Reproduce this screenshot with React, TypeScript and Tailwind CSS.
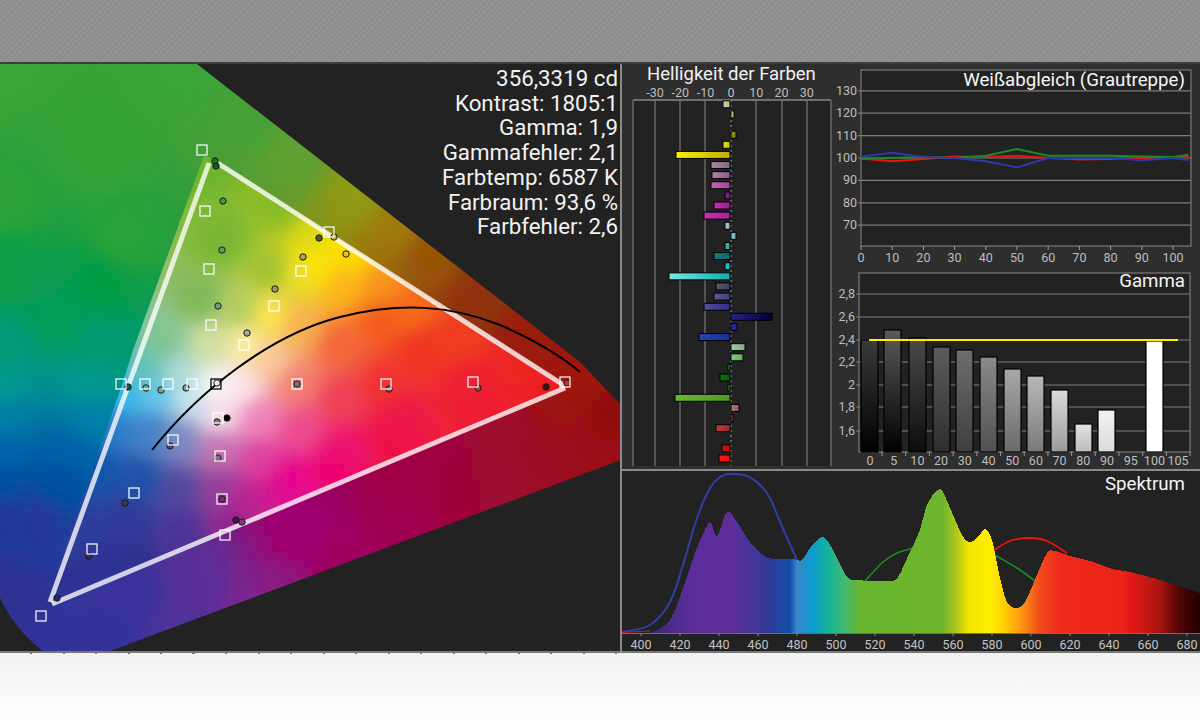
import { useMemo } from 'react';

type Stop = [number, number, string];

// colour samples read off the diagram, outside of the measured triangle
const outerField: Stop[] = [
  [0, 64, '#3aa537'], [197, 64, '#3aa537'], [100, 150, '#35a437'], [0, 200, '#2da338'], [120, 240, '#2aa33a'], [0, 270, '#0a9e45'],
  [100, 280, '#039c45'], [60, 320, '#069c58'], [0, 350, '#009a78'], [100, 350, '#009a70'], [0, 383, '#009a8f'], [90, 383, '#009a8f'],
  [0, 417, '#0080a8'], [90, 417, '#0080a8'], [0, 450, '#0062a8'], [70, 450, '#0062a8'], [0, 483, '#0050a0'], [60, 483, '#0050a0'],
  [0, 516, '#26389a'], [40, 520, '#26389a'], [10, 600, '#2e3192'], [40, 640, '#30339a'], [110, 640, '#34339c'], [180, 635, '#4f3098'],
  [130, 600, '#38339a'], [200, 590, '#5a2f98'], [250, 610, '#7b2890'], [280, 590, '#8a1a80'], [340, 560, '#9e0060'], [300, 540, '#a00070'],
  [400, 530, '#9e0050'], [420, 480, '#a00045'], [440, 450, '#a0043e'], [460, 490, '#9f0538'], [500, 480, '#9e0a30'], [500, 425, '#9e0c2c'],
  [540, 455, '#9c0c22'], [560, 410, '#9c1212'], [621, 455, '#9c0f14'],
  [621, 410, '#8f0f08'], [580, 370, '#a01508'], [530, 340, '#9a1c08'], [480, 300, '#8f3208'], [430, 250, '#985406'], [400, 225, '#a07a0a'],
  [360, 190, '#8f9a18'], [300, 150, '#5ea030'], [250, 110, '#45a036'],
];

// and inside of it
const innerField: Stop[] = [
  [210, 160, '#6cb52d'], [280, 205, '#86bb25'], [320, 235, '#d8d818'], [335, 245, '#ffe600'], [350, 258, '#ffd800'], [380, 285, '#f7941d'],
  [410, 310, '#f56a1a'], [460, 340, '#ef3b20'], [520, 370, '#ed2524'], [560, 388, '#ed1c24'],
  [222, 240, '#78b733'], [270, 270, '#9cc230'], [300, 275, '#ece02a'], [315, 265, '#ffe600'], [345, 285, '#ffb31c'], [380, 320, '#f4581f'], [420, 350, '#ef3323'],
  [200, 300, '#7cb858'], [240, 310, '#b0cc60'], [270, 315, '#ffe84a'], [300, 325, '#f7b050'], [340, 345, '#f5643a'], [385, 385, '#f03030'], [470, 385, '#ed2030'],
  [165, 340, '#80c490'], [210, 345, '#d0e0a0'], [245, 345, '#fff0a0'], [270, 360, '#fbc8a0'], [297, 384, '#f47f70'], [340, 400, '#ef4055'], [400, 420, '#ed1848'], [480, 410, '#ed1c30'],
  [145, 370, '#60c0b0'], [180, 375, '#b0dcd8'], [215, 385, '#ffffff'], [240, 385, '#ffe8f0'],
  [125, 395, '#30b8ee'], [155, 395, '#60c8f0'], [190, 400, '#c8e8f4'], [220, 415, '#ffe0ee'], [260, 420, '#f080b8'], [300, 430, '#ee4a90'], [345, 450, '#ec1270'], [390, 445, '#ed1048'],
  [115, 430, '#2a78c8'], [150, 430, '#4080c8'], [180, 440, '#7888c0'], [220, 450, '#c870b0'], [260, 460, '#e040a0'], [290, 480, '#ec008c'], [335, 470, '#ec0070'],
  [100, 470, '#0f54a8'], [140, 480, '#1c50a8'], [180, 490, '#50489c'], [220, 490, '#963c98'], [250, 500, '#c02090'], [280, 495, '#d81090'],
  [80, 530, '#2e3c9c'], [130, 520, '#2e3a98'], [180, 530, '#483598'], [230, 525, '#92278f'],
  [60, 590, '#2e3192'], [100, 570, '#2e3192'], [140, 560, '#2f3292'], [180, 545, '#503094'],
];

const CELL = 8;

function sampleField(field: Stop[], x: number, y: number) {
  let r = 0;
  let g = 0;
  let b = 0;
  let total = 0;
  for (const [sx, sy, hex] of field) {
    const d = (x - sx) ** 2 + (y - sy) ** 2 + 250;
    const w = 1 / (d * d);
    total += w;
    r += w * parseInt(hex.slice(1, 3), 16);
    g += w * parseInt(hex.slice(3, 5), 16);
    b += w * parseInt(hex.slice(5, 7), 16);
  }
  return `rgb(${Math.round(r / total)},${Math.round(g / total)},${Math.round(b / total)})`;
}

function ColorField({ field, x0, y0, x1, y1 }: { field: Stop[]; x0: number; y0: number; x1: number; y1: number }) {
  const cells = useMemo(() => {
    const out: { x: number; y: number; fill: string }[] = [];
    for (let y = y0; y < y1; y += CELL) {
      for (let x = x0; x < x1; x += CELL) {
        out.push({ x, y, fill: sampleField(field, x + CELL / 2, y + CELL / 2) });
      }
    }
    return out;
  }, [field, x0, y0, x1, y1]);
  return (
    <g filter="url(#soften)">
      {cells.map((c) => (
        <rect key={`${c.x}-${c.y}`} x={c.x} y={c.y} width={CELL + 1} height={CELL + 1} fill={c.fill} />
      ))}
    </g>
  );
}

const squares: [number, number, string?][] = [
  [202, 150], [205, 211], [209, 269], [211, 325], [244, 345], [274, 306], [301, 271], [329, 232],
  [121, 384], [145, 384], [168, 384], [192, 384], [216, 384, '#000'], [297, 384], [386, 384], [473, 382], [565, 382],
  [218, 418], [173, 440], [220, 456], [134, 493], [222, 499], [225, 535], [92, 549], [41, 616],
];

const dots: [number, number, string][] = [
  [215, 161, '#1f7a2a'], [216, 166, '#14591f'], [223, 201, '#3f9a40'], [222, 250, '#4fa560'], [218, 306, '#7a9a80'],
  [247, 333, '#a8a8a0'], [275, 289, '#9a9a70'], [303, 257, '#a8a860'], [319, 238, '#55551c'], [334, 237, '#b8b820'], [346, 254, '#d8c820'],
  [128, 387, '#0a5a50'], [146, 388, '#60b0a8'], [161, 390, '#70a8a0'], [186, 388, '#809a90'], [217, 383, '#e8e8e8'],
  [297, 384, '#7a7070'], [389, 389, '#8a5050'], [478, 388, '#a04040'], [546, 387, '#401010'], [567, 383, '#c03030'],
  [227, 418, '#000000'], [217, 422, '#807a80'], [170, 446, '#444a58'], [218, 458, '#807080'], [125, 503, '#3a3a60'],
  [222, 499, '#7a2a80'], [236, 520, '#4a0f50'], [242, 522, '#90308a'], [89, 556, '#2a2a70'], [57, 598, '#252a70'],
];

function GamutPanel() {
  return (
    <div className="relative w-[622px] border-r-2 border-[#8a8a8a] bg-[#222222]">
      <svg viewBox="0 64 620 589" className="block h-[589px] w-[620px]">
        <defs>
          <filter id="soften" filterUnits="userSpaceOnUse" x="-40" y="20" width="720" height="680">
            <feGaussianBlur stdDeviation="4" />
          </filter>
          <clipPath id="gamut">
            <path d="M0 64 L197 64 L580 362 L621 405 L621 460 L110 651 L43 651 Q15 630 0 598 Z" />
          </clipPath>
          <clipPath id="inner">
            <path d="M204 156 L216 160 L568 388 L52 606 L46 600 L122 385 L133 350 Z" />
          </clipPath>
        </defs>

        <g clipPath="url(#gamut)">
          <ColorField field={outerField} x0={-16} y0={48} x1={640} y1={668} />
        </g>
        <g clipPath="url(#inner)">
          <ColorField field={innerField} x0={24} y0={136} x1={592} y1={624} />
        </g>

        {/* measured gamut triangle */}
        <g stroke="#ffffff" strokeOpacity="0.78" strokeWidth="5" fill="none">
          <path d="M209 163 L50 602" />
          <path d="M216 162 L565 386" />
          <path d="M565 388 L52 604" />
        </g>

        <path d="M152 450 C 200 390 270 335 340 317 C 400 302 450 305 500 325 C 530 338 560 355 580 372" fill="none" stroke="#000" strokeWidth="2" />

        {dots.map(([cx, cy, fill], i) => (
          <circle key={i} cx={cx} cy={cy} r="3.2" fill={fill} stroke="#1a1a1a" strokeWidth="1" />
        ))}
        {squares.map(([x, y, stroke], i) => (
          <rect key={i} x={x - 5} y={y - 5} width="10" height="10" fill="none" stroke={stroke ?? '#ffffff'} strokeOpacity={stroke ? 1 : 0.92} strokeWidth="1.3" />
        ))}
        <rect x="0" y="651" width="620" height="2" fill="#777777" />
      </svg>

      <div className="absolute right-[2px] top-[2px] text-right text-[22.3px] leading-[24.7px] text-[#f2f2f2]">
        <div>356,3319 cd</div>
        <div>Kontrast: 1805:1</div>
        <div>Gamma: 1,9</div>
        <div>Gammafehler: 2,1</div>
        <div>Farbtemp: 6587 K</div>
        <div>Farbraum: 93,6 %</div>
        <div>Farbfehler: 2,6</div>
      </div>
    </div>
  );
}

// [row, from, to, color left, color right], values in px from the zero line
const brightnessBars: [number, number, number, string, string][] = [
  [0, -7, 0, '#cfcfa8', '#b8b890'],
  [1, 1, 4, '#d0d090', '#b8b870'],
  [3, 1, 6, '#8a8a10', '#8a8a10'],
  [4, -7, 0, '#e0e010', '#c8c810'],
  [5, -54, 0, '#ffee00', '#c0ae00'],
  [6, -19, 0, '#a58aa0', '#806880'],
  [7, -18, 0, '#b080b0', '#885a88'],
  [8, -19, 0, '#c068b8', '#a04a98'],
  [9, -5, 0, '#801a88', '#801a88'],
  [10, -16, 0, '#c030b0', '#a01c98'],
  [11, -26, 0, '#c836b0', '#a82098'],
  [12, -5, 0, '#b0cccc', '#90acac'],
  [13, 1, 6, '#80c8c8', '#70b0b0'],
  [14, -5, 0, '#40b8b8', '#30a0a0'],
  [15, -16, 0, '#108080', '#086868'],
  [16, -5, 0, '#10d0d0', '#10b8b8'],
  [17, -61, 0, '#80e4e4', '#08b0b0'],
  [18, -14, 0, '#585870', '#40405a'],
  [19, -16, 0, '#5a5a98', '#404080'],
  [20, -26, 0, '#50509c', '#303088'],
  [21, 1, 42, '#24248a', '#000038'],
  [22, 1, 7, '#2030b0', '#1a2898'],
  [23, -31, 0, '#2444b0', '#18309c'],
  [24, 1, 15, '#a0c8a0', '#80b080'],
  [25, 1, 13, '#80cc80', '#60b060'],
  [26, -2, 0, '#30a030', '#30a030'],
  [27, -10, 0, '#107010', '#0c5c0c'],
  [28, -2, 0, '#30a030', '#30a030'],
  [29, -55, 0, '#68b830', '#509c24'],
  [30, 1, 9, '#a87878', '#906060'],
  [31, 1, 3, '#b84858', '#b84858'],
  [32, -14, 0, '#b83840', '#a02830'],
  [34, -8, 0, '#d81010', '#b80c0c'],
  [35, -11, 0, '#ff1414', '#f01010'],
];

const brightnessGrid = [633, 655, 680, 705, 756, 782, 807, 831];
const brightnessTicks = [-30, -20, -10, 0, 10, 20, 30];

function BrightnessPanel() {
  return (
    <div className="relative h-full w-[210px] bg-[#2e2e2e]">
      <div className="absolute left-[25px] top-[1px] text-[18.5px] leading-[18px] text-[#f2f2f2]">Helligkeit der Farben</div>
      <svg viewBox="622 64 210 405" className="block h-[405px] w-[210px]">
        <defs>
          {brightnessBars.map(([row, , , from, to]) => (
            <linearGradient key={row} id={`bar${row}`}>
              <stop offset="0" stopColor={from} />
              <stop offset="1" stopColor={to} />
            </linearGradient>
          ))}
        </defs>
        <rect x="633" y="100" width="198" height="366" fill="#222222" />
        <path d="M633 100 H831" stroke="#888" strokeWidth="1.5" />
        {brightnessGrid.map((x) => (
          <path key={x} d={`M${x} 100 V466`} stroke="#777" strokeWidth="1.2" />
        ))}
        <path d="M731 100 V466" stroke="#999" strokeWidth="1" strokeDasharray="2 3" />
        {brightnessTicks.map((t, i) => (
          <text key={t} x={655 + i * 25.3} y="96.5" textAnchor="middle" fontSize="12.5" fill="#bdbdbd">
            {t}
          </text>
        ))}
        {brightnessBars.map(([row, a, b]) => (
          <rect key={row} x={730 + a} y={100.8 + row * 10.12} width={b - a} height="7" fill={`url(#bar${row})`} stroke="#000" strokeWidth="1" />
        ))}
      </svg>
    </div>
  );
}

const wbX = (v: number) => 861 + v * 3.12;
const wbY = (v: number) => 158 - (v - 100) * 2.24;
const wbSteps = [0, 10, 20, 30, 40, 50, 60, 70, 80, 90, 100, 105];
const wbLines: [string, number[]][] = [
  ['#f01212', [99.8, 98.5, 99.5, 100.7, 100.5, 101, 100, 99.3, 99.5, 100, 100, 100.8]],
  ['#1c8a2c', [99.7, 100, 100.5, 100, 101, 104, 101, 101, 101, 100.7, 100.5, 101.5]],
  ['#2a3aa8', [100.7, 102.3, 100.5, 100, 98.5, 95.8, 100, 100, 100, 99, 100, 99]],
];

function WhiteBalance() {
  return (
    <div className="relative h-[203px] bg-[#2e2e2e]">
      <div className="absolute right-[15px] top-[4px] text-[18.7px] leading-[24px] text-[#f5f5f5]">Weißabgleich (Grautreppe)</div>
      <svg viewBox="832 64 368 203" className="block h-[203px] w-[368px]">
        <rect x="861" y="70" width="330" height="176" fill="#222222" stroke="#888" strokeWidth="1" />
        {[130, 120, 110, 100, 90, 80, 70].map((v) => (
          <g key={v}>
            <path d={`M858 ${wbY(v)} H1191`} stroke="#7c7c7c" strokeWidth="1.2" />
            <text x="857" y={wbY(v) + 4} textAnchor="end" fontSize="12.5" fill="#bdbdbd">
              {v}
            </text>
          </g>
        ))}
        {wbSteps.slice(0, 11).map((v) => (
          <g key={v}>
            <path d={`M${wbX(v)} 246 V250`} stroke="#999" strokeWidth="1" />
            <text x={wbX(v)} y="262" textAnchor="middle" fontSize="12.5" fill="#bdbdbd">
              {v}
            </text>
          </g>
        ))}
        {wbLines.map(([color, values]) => (
          <polyline
            key={color}
            points={values.map((v, i) => `${wbX(wbSteps[i])},${wbY(v)}`).join(' ')}
            fill="none"
            stroke={color}
            strokeWidth="2"
          />
        ))}
      </svg>
    </div>
  );
}

const gammaBars: [number, number, string, string][] = [
  [861, 340, '#3a3a3a', '#000000'],
  [884, 330, '#5a5a5a', '#000000'],
  [909, 338, '#4a4a4a', '#0c0c0c'],
  [933, 347, '#5c5c5c', '#2e2e2e'],
  [956, 350, '#6e6e6e', '#3e3e3e'],
  [980, 357, '#8a8a8a', '#505050'],
  [1004, 369, '#a8a8a8', '#6a6a6a'],
  [1027, 376, '#b8b8b8', '#7a7a7a'],
  [1051, 390, '#dadada', '#9a9a9a'],
  [1075, 424, '#e2e2e2', '#bcbcbc'],
  [1098, 410, '#f2f2f2', '#dcdcdc'],
  [1146, 341, '#ffffff', '#ffffff'],
];
const gammaLevels: [string, number][] = [['2,8', 294], ['2,6', 317], ['2,4', 340], ['2,2', 362], ['2', 385], ['1,8', 407], ['1,6', 431]];
const gammaSteps = [0, 5, 10, 20, 30, 40, 50, 60, 70, 80, 90, 95, 100, 105];

function Gamma() {
  return (
    <div className="relative h-[202px] bg-[#2e2e2e]">
      <div className="absolute right-[15px] top-[2px] text-[18.7px] leading-[24px] text-[#f5f5f5]">Gamma</div>
      <svg viewBox="832 267 368 202" className="block h-[202px] w-[368px]">
        <defs>
          {gammaBars.map(([x, , from, to]) => (
            <linearGradient key={x} id={`g${x}`} x1="0" y1="0" x2="0" y2="1">
              <stop offset="0" stopColor={from} />
              <stop offset="1" stopColor={to} />
            </linearGradient>
          ))}
        </defs>
        <rect x="859" y="273" width="331" height="179" fill="#222222" stroke="#888" strokeWidth="1" />
        {gammaLevels.map(([label, y]) => (
          <g key={label}>
            <path d={`M856 ${y} H1190`} stroke="#7c7c7c" strokeWidth="1.2" />
            <text x="855" y={y + 4} textAnchor="end" fontSize="12.5" fill="#bdbdbd">
              {label}
            </text>
          </g>
        ))}
        {gammaBars.map(([x, top]) => (
          <rect key={x} x={x} y={top} width="17" height={452 - top} fill={`url(#g${x})`} stroke="#000" strokeWidth="1.2" />
        ))}
        <path d="M869 340 H1178" stroke="#ffee00" strokeWidth="2" />
        {gammaSteps.map((v, i) => (
          <g key={v}>
            <path d={`M${882 + i * 23.7} 452 V456`} stroke="#999" strokeWidth="1" />
            <text x={870 + i * 23.7} y="465" textAnchor="middle" fontSize="12.5" fill="#bdbdbd">
              {v}
            </text>
          </g>
        ))}
      </svg>
    </div>
  );
}

type Pt = [number, number];

// catmull-rom through the read-off points, so the curves stay round
function smooth(pts: Pt[]) {
  let d = `M${pts[0][0]} ${pts[0][1]}`;
  for (let i = 0; i < pts.length - 1; i++) {
    const p0 = pts[Math.max(i - 1, 0)];
    const p1 = pts[i];
    const p2 = pts[i + 1];
    const p3 = pts[Math.min(i + 2, pts.length - 1)];
    const c1x = p1[0] + (p2[0] - p0[0]) / 6;
    const c1y = p1[1] + (p2[1] - p0[1]) / 6;
    const c2x = p2[0] - (p3[0] - p1[0]) / 6;
    const c2y = p2[1] - (p3[1] - p1[1]) / 6;
    d += ` C${c1x} ${c1y} ${c2x} ${c2y} ${p2[0]} ${p2[1]}`;
  }
  return d;
}

const spectrumCurve: Pt[] = [
  [640, 633], [653, 632], [670, 620], [683, 588], [697, 548], [708, 524], [712, 525], [717, 536], [727, 512], [737, 522], [750, 542], [763, 555], [773, 559],
  [783, 559], [793, 559], [802, 560], [810, 548], [820, 538], [827, 540], [837, 558], [847, 577], [857, 580], [875, 581], [890, 581], [898, 577], [910, 552],
  [920, 530], [927, 505], [940, 489], [950, 508], [962, 535], [970, 542], [978, 537], [985, 529], [992, 540], [1000, 578], [1007, 602], [1016, 608], [1025, 602],
  [1037, 575], [1047, 553], [1055, 551], [1070, 556], [1090, 561], [1113, 569], [1130, 572], [1160, 580], [1200, 593],
];
const blueCurve: Pt[] = [[622, 632], [650, 625], [670, 602], [683, 565], [697, 518], [710, 488], [720, 477], [730, 474], [747, 476], [760, 485], [770, 498], [780, 522], [797, 560]];
const greenCurve: Pt[] = [[865, 581], [883, 562], [897, 553], [913, 548], [930, 540]];
const greenCurve2: Pt[] = [[985, 548], [995, 555], [1017, 568], [1035, 581]];
const redCurve: Pt[] = [[985, 558], [993, 551], [1010, 541], [1030, 538], [1047, 541], [1067, 553]];

const spectrumStops: [number, string][] = [
  [650, '#3a2a70'], [690, '#5b2d9b'], [730, '#5f2d9a'], [770, '#2f3a98'], [790, '#0f4fa8'], [797, '#3d86c8'], [812, '#0a9bd0'], [826, '#12b0a0'],
  [842, '#3cb878'], [860, '#6ab52f'], [942, '#6db52d'], [955, '#a8c520'], [968, '#f0e400'], [990, '#fff000'], [1002, '#ffd400'], [1020, '#ff9a10'],
  [1040, '#f04a1a'], [1060, '#ee2a1a'], [1120, '#ec2418'], [1130, '#e31a16'], [1160, '#a81410'], [1180, '#4d0505'], [1198, '#280000'],
];
const spectrumLabels = [400, 420, 440, 460, 480, 500, 520, 540, 560, 580, 600, 620, 640, 660, 680];

function Spectrum() {
  return (
    <div className="relative h-[184px] border-t-2 border-[#8a8a8a] bg-[#222222]">
      <div className="absolute right-[15px] top-[1px] text-[18.7px] leading-[24px] text-[#f5f5f5]">Spektrum</div>
      <svg viewBox="622 471 578 182" className="block h-[182px] w-[578px]">
        <defs>
          <linearGradient id="rainbow" gradientUnits="userSpaceOnUse" x1="622" y1="0" x2="1200" y2="0">
            {spectrumStops.map(([x, c]) => (
              <stop key={x} offset={(x - 622) / 578} stopColor={c} />
            ))}
          </linearGradient>
        </defs>
        <path d={smooth(blueCurve)} fill="none" stroke="#2f3fa8" strokeWidth="2" />
        <path d={`${smooth(greenCurve)} ${smooth(greenCurve2)}`} fill="none" stroke="#1c8a2c" strokeWidth="1.6" />
        <path d={smooth(redCurve)} fill="none" stroke="#f01212" strokeWidth="1.8" />
        <path d="M622 632.5 L650 631" fill="none" stroke="#d01818" strokeWidth="1" />
        <path d={`${smooth(spectrumCurve)} L1200 633 L640 633 Z`} fill="url(#rainbow)" shapeRendering="crispEdges" />
        <path d="M622 633.5 H1200" stroke="#66707a" strokeWidth="1" />
        {spectrumLabels.map((nm) => (
          <g key={nm}>
            <path d={`M${641 + (nm - 400) * 1.95} 633 V636`} stroke="#888" strokeWidth="1" />
            <text x={641 + (nm - 400) * 1.95} y="649" textAnchor="middle" fontSize="12.5" fill="#c4c4c4">
              {nm}
            </text>
          </g>
        ))}
        <rect x="622" y="651" width="578" height="2" fill="#777777" />
      </svg>
    </div>
  );
}

export default function App() {
  return (
    <div className="flex h-[720px] w-[1200px] flex-col overflow-hidden bg-white font-['Roboto',sans-serif]">
      <div className="h-[62px] bg-[repeating-linear-gradient(135deg,#8e8e8e_0px,#8e8e8e_2px,#949494_2px,#949494_4px)]" />
      <div className="flex h-[591px] border-t-2 border-t-[#3f3f3f] bg-[#2e2e2e]">
        <GamutPanel />
        <div className="flex flex-1 flex-col">
          <div className="flex h-[405px]">
            <BrightnessPanel />
            <div className="flex flex-1 flex-col">
              <WhiteBalance />
              <Gamma />
            </div>
          </div>
          <Spectrum />
        </div>
      </div>
      <div className="flex-1 bg-linear-to-b from-[#f2f2f2] to-white">
        <div className="h-[1px] w-[620px] bg-[repeating-linear-gradient(90deg,transparent_0px,transparent_30px,#777777_30px,#777777_32.5px)]" />
      </div>
    </div>
  );
}
